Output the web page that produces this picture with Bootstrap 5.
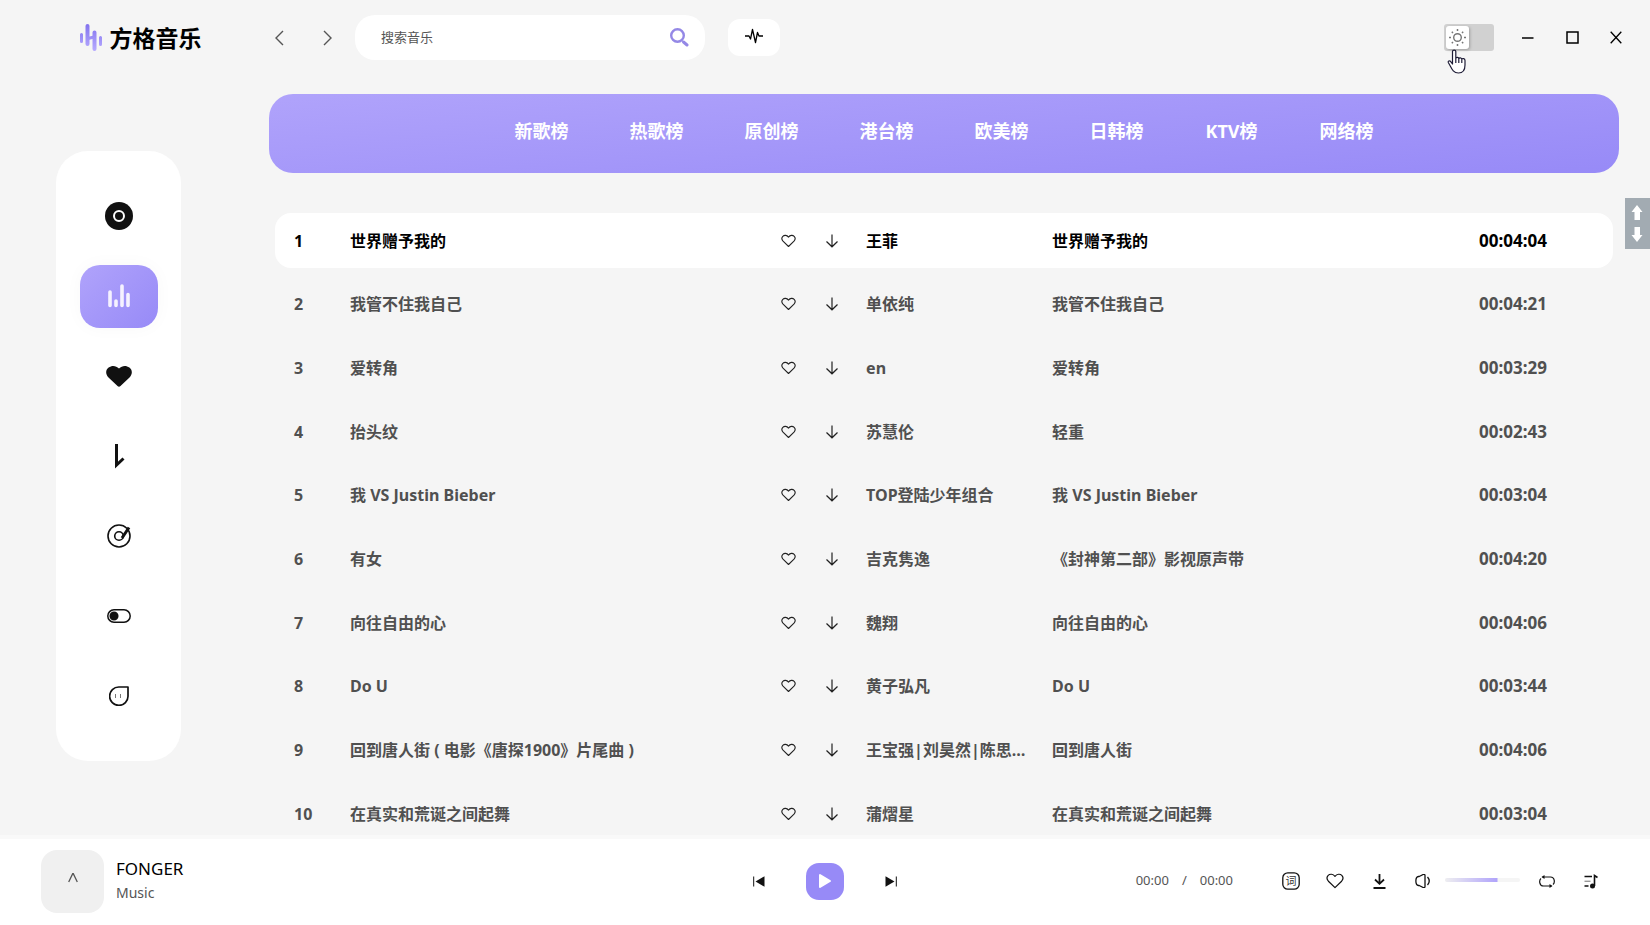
<!DOCTYPE html>
<html lang="zh-CN">
<head>
<meta charset="utf-8">
<meta name="viewport" content="width=device-width, initial-scale=1">
<title>方格音乐</title>
<link href="https://cdn.jsdelivr.net/npm/bootstrap@5.3.0/dist/css/bootstrap.min.css" rel="stylesheet">
<style>
:root { --accent: #978af7; --accent-light: #b0a3fb; --ink: #111; --soft: #505050; }
body { background: #f5f5f5; color: var(--ink); font-family: "Noto Sans", "Noto Sans CJK SC", sans-serif; font-size: 16px; }
svg { display: block; fill: none; stroke: currentColor; }
.plain { border: 0; background: none; padding: 0; color: inherit; display: flex; align-items: center; justify-content: center; }
.rail { width: 269px; }
.topbar { height: 75px; }
.brand { padding-left: 12px; }
.brand-name { font-size: 23px; font-weight: 700; line-height: 32px; color: #000; }
.history { margin-left: -12px; margin-right: 6px; }
.step { width: 44px; height: 44px; color: #555; }
.searchbox { width: 350px; height: 45px; border-radius: 20px; background: #fff; margin-right: 23px; }
.searchbox input { font-size: 13px; color: #555; box-shadow: none !important; padding-left: 26px; }
.searchbox input::placeholder { color: #555; }
.searchbox button { color: #9488e6; }
.pulse { width: 52px; height: 37px; border-radius: 12px; background: #fff; padding-bottom: 3px; color: #000; }
.win { width: 44px; height: 44px; color: #000; }
.theme input { appearance: none; display: block; width: 50px; height: 27px; margin: 0; border-radius: 3px; background: #d1d1d1; }
.theme .knob { left: 2px; top: 2px; width: 23px; height: 23px; border-radius: 3px; background: #fff; box-shadow: 1px 1px 3px rgba(0,0,0,.25); color: #777; display: flex; align-items: center; justify-content: center; }
.hand { left: 3px; top: 25px; z-index: 2; }
.sidenav { width: 125px; border-radius: 32px; background: #fff; margin: 76px 0 0 56px; padding: 25px 0; }
.sidenav li { height: 80px; }
.sidenav a { width: 78px; height: 63px; border-radius: 20px; color: var(--ink); }
.sidenav a.active { background: linear-gradient(135deg, var(--accent-light), var(--accent)); color: #f5f2ff; box-shadow: 0 0 18px rgba(0,0,0,.03); }
.charts { height: 79px; margin: 19px 31px 0 0; padding-bottom: 5px; border-radius: 24px; gap: 61px; background: linear-gradient(175deg, var(--accent-light), var(--accent)); }
.charts a { min-width: 54px; text-align: center; color: #fff; font-size: 18px; font-weight: 700; }
.songs { width: calc(100% - 43px); margin: 31px 0 0 6px; table-layout: fixed; border-collapse: separate; border-spacing: 0 9px; font-weight: 700; color: var(--soft); }
.songs td { height: 55px; padding: 0; vertical-align: middle; white-space: nowrap; overflow: hidden; text-overflow: ellipsis; }
.songs tr:nth-child(3n+2) td { height: 54px; }
.songs td:nth-child(1) { padding-left: 19px; }
.songs td:nth-child(5) { padding: 0 18px 0 12px; }
.songs td:nth-child(7) { font-size: 17px; }
.songs .now { color: #000; }
.songs .now td { background: #fff; }
.songs .now td:first-child { border-radius: 16px 0 0 16px; }
.songs .now td:last-child { border-radius: 0 16px 16px 0; }
.songs button { width: 44px; height: 32px; color: #222; }
.jump { right: 0; top: 198px; width: 25px; height: 51px; background: #a2abb2; color: #fff; padding: 7px 2px 7px 0; }
.player { height: 90px; background: #fff; border-top: 4px solid #f9f9f9; display: grid; grid-template-columns: 1fr auto 1fr; padding: 0 37px 2px; align-items: center; flex: none; z-index: 1; }
.cover { width: 63px; height: 63px; border-radius: 16px; background: #f0f0f0; color: #555; margin-left: 4px; padding-bottom: 7px; }
.song-name { font-size: 17px; line-height: 24px; color: #000; }
.song-by { font-size: 14px; line-height: 24px; color: #555; }
.side { width: 44px; height: 44px; }
.play { width: 38px; height: 37px; border-radius: 13px; background: var(--accent); color: #fff; margin: 0 25px; }
.clock { font-size: 13px; color: #555; gap: 13px; margin-right: 36px; }
.volume { appearance: none; width: 75px; height: 4px; border-radius: 2px; margin: 0 5px 3px 0; background: linear-gradient(90deg, #eeeef0, #b0a3fb) 0 0 / var(--level) 100% no-repeat #f5f5f5; }
.volume::-webkit-slider-thumb { appearance: none; width: 4px; height: 4px; }
</style>
</head>
<body>
<svg class="d-none" aria-hidden="true">
  <symbol id="heart" viewBox="0 0 18 16"><path d="M9 14.6 2.400 8.200C.7 6.300.7 4 2.200 2.400c1.700-1.700 4.800-1.600 6.800.9 2-2.500 5.100-2.600 6.800-.9 1.500 1.600 1.500 3.900-.2 5.800z" stroke-linejoin="round"/></symbol>
  <symbol id="down" viewBox="0 0 14 14"><path d="M7 .5v12.200M1.500 7.500 7 12.800l5.500-5.300"/></symbol>
</svg>
<div class="vh-100 d-flex flex-column overflow-hidden position-relative">
  <div class="d-flex flex-fill" style="min-height:0">
    <aside class="rail flex-shrink-0">
      <div class="topbar brand d-flex align-items-center">
        <svg class="ms-auto flex-shrink-0" width="22" height="27" viewBox="0 0 22 27" stroke-linecap="round" aria-hidden="true">
          <defs><linearGradient id="lg" gradientUnits="userSpaceOnUse" x1="0" y1="0" x2="0" y2="27"><stop stop-color="#8272ee"/><stop offset="1" stop-color="#b7abff"/></linearGradient></defs>
          <g stroke="url(#lg)"><path stroke-width="3" d="M1.500 10.500v7M20.500 13.500v7"/><path stroke-width="4" d="M7.500 2v18M14.500 8.500V25"/><path stroke-width="3" d="M8 14.500 14 13"/></g>
        </svg>
        <span class="brand-name ms-2 me-auto">方格音乐</span>
      </div>
      <nav class="sidenav" aria-label="主导航">
        <ul class="nav flex-column">
          <li class="d-flex align-items-center justify-content-center"><a class="plain" href="#" aria-label="发现"><svg width="28" height="28" viewBox="0 0 28 28"><circle cx="14" cy="14" r="14" fill="currentColor" stroke="none"/><circle cx="14" cy="14" r="5" stroke="#fff" stroke-width="2"/></svg></a></li>
          <li class="d-flex align-items-center justify-content-center"><a class="plain active" href="#" aria-label="排行榜"><svg width="22" height="24" viewBox="0 0 22 24" stroke-width="3.600" stroke-linecap="round"><path d="M2 8v13.500M8 17v4.500M14 2v19.500M20 10.500v11"/></svg></a></li>
          <li class="d-flex align-items-center justify-content-center"><a class="plain" href="#" aria-label="喜欢"><svg width="26" height="21" viewBox="0 0 26 21"><path fill="currentColor" stroke="none" d="M11.500 20 2.500 11.500C-1 8-.2 3.600 2.600 1.600 6-.8 10-.4 13 2.600c3-3 7-3.400 10.400-1 2.800 2 3.600 6.400.1 9.900L14.500 20q-1.500 1.300-3 0z"/></svg></a></li>
          <li class="d-flex align-items-center justify-content-center"><a class="plain" href="#" aria-label="下载"><svg width="12" height="26" viewBox="0 0 12 26" stroke-width="3"><path d="M3.500 1v21l7-6.500"/></svg></a></li>
          <li class="d-flex align-items-center justify-content-center"><a class="plain" href="#" aria-label="唱片"><svg width="24" height="24" viewBox="0 0 24 24" stroke-width="1.600"><circle cx="12" cy="12" r="11"/><circle cx="12" cy="12" r="4.300"/><path stroke-width="3" d="m15 14 7-10.500"/></svg></a></li>
          <li class="d-flex align-items-center justify-content-center"><a class="plain" href="#" aria-label="设置"><svg width="24" height="14" viewBox="0 0 24 14" stroke-width="1.500"><rect x=".8" y=".8" width="22.400" height="12.400" rx="6.200"/><circle cx="7" cy="7" r="3.800" fill="currentColor"/></svg></a></li>
          <li class="d-flex align-items-center justify-content-center"><a class="plain" href="#" aria-label="消息"><svg width="20" height="20" viewBox="0 0 20 20" stroke-width="1.700"><path d="M19 1H10a9.200 9.200 0 1 0 9 9z" stroke-linejoin="round"/><path stroke="#777" stroke-width="1" d="M6.500 8v4M11.500 8v4"/></svg></a></li>
        </ul>
      </nav>
    </aside>
    <div class="flex-fill d-flex flex-column" style="min-width:0">
      <header class="topbar d-flex align-items-center flex-shrink-0">
        <div class="history d-flex align-items-center">
          <button class="plain step" aria-label="后退"><svg width="9" height="16" viewBox="0 0 9 16" stroke-width="1.400"><path d="M8 1 1 8l7 7"/></svg></button>
          <button class="plain step ms-1" aria-label="前进"><svg width="9" height="16" viewBox="0 0 9 16" stroke-width="1.400"><path d="m1 1 7 7-7 7"/></svg></button>
        </div>
        <form class="searchbox d-flex align-items-center" role="search">
          <input class="form-control border-0 bg-transparent py-0" type="search" placeholder="搜索音乐" aria-label="搜索音乐">
          <button type="button" class="plain me-3" aria-label="搜索"><svg width="19" height="19" viewBox="0 0 19 19"><circle cx="7.500" cy="7.500" r="6.300" stroke-width="2.400"/><path stroke-width="3" stroke-linecap="round" d="m13.500 14 3.500 3"/></svg></button>
        </form>
        <button class="plain pulse" aria-label="听歌识曲"><svg width="18" height="16" viewBox="0 0 18 16" stroke-width="1.300" stroke-linejoin="round"><path d="M0 8h4l1.500 3L7.500 1.500l3 13 2-10L14 8h4"/></svg></button>
        <div class="d-flex align-items-center ms-auto me-2 pe-1">
          <label class="theme position-relative me-2"><input type="checkbox" aria-label="深色模式"><span class="knob position-absolute"><svg width="17" height="17" viewBox="0 0 17 17"><circle cx="8.500" cy="8.500" r="3.800" stroke-width="1.400"/><path stroke-width="1.500" d="M8.500 0v2M8.500 15v2M0 8.500h2M15 8.500h2M2.800 2.800 4 4M13 13l1.200 1.200M14.200 2.800 13 4M4 13l-1.200 1.200"/></svg></span>
            <svg class="hand position-absolute" width="20" height="25" viewBox="0 0 20 25" aria-hidden="true"><path d="M5.500 15V2.600C5.500.5 8.800.5 8.800 2.600V9.500c.2-1.700 3-1.500 3 .3.300-1.500 2.900-1.300 3 .5.500-1.300 3.200-1 3.200 1.200V16c0 5-2.500 8-6.500 8-5 0-6.500-3.500-8.500-7.500L1.300 13.500c-.6-1.500 1-2.200 2.200-1.200zM8.800 9.500v4.500M11.800 10v4M14.800 10.500V14" fill="#fff" stroke="#1d1b35" stroke-width="1.200" stroke-linejoin="round"/></svg>
          </label>
          <button class="plain win ms-1" aria-label="最小化"><svg width="12" height="12" viewBox="0 0 12 12" stroke-width="1.500"><path d="M0 6h11.500"/></svg></button>
          <button class="plain win" aria-label="最大化"><svg width="13" height="13" viewBox="0 0 13 13" stroke-width="1.500"><path d="M1 1h11v11H1z"/></svg></button>
          <button class="plain win" aria-label="关闭"><svg width="12" height="13" viewBox="0 0 12 13" stroke-width="1.300"><path d="m.7.700 10.600 11.600M11.300.700.7 12.300"/></svg></button>
        </div>
      </header>
      <nav class="charts d-flex align-items-center justify-content-center flex-shrink-0" aria-label="榜单">
        <a class="text-decoration-none" href="#">新歌榜</a><a class="text-decoration-none" href="#">热歌榜</a><a class="text-decoration-none" href="#">原创榜</a><a class="text-decoration-none" href="#">港台榜</a><a class="text-decoration-none" href="#">欧美榜</a><a class="text-decoration-none" href="#">日韩榜</a><a class="text-decoration-none" href="#">KTV榜</a><a class="text-decoration-none" href="#">网络榜</a>
      </nav>
      <main class="flex-fill overflow-hidden" style="min-height:0">
        <table class="songs">
          <colgroup><col style="width:75px"><col style="width:31.1%"><col style="width:44px"><col style="width:44px"><col style="width:198px"><col><col style="width:134px"></colgroup>
          <tbody id="songRows"></tbody>
        </table>
      </main>
    </div>
  </div>
  <button class="plain jump position-absolute flex-column justify-content-between" aria-label="滚动"><svg width="12" height="16" viewBox="0 0 12 16"><path fill="currentColor" stroke="none" d="m6 0 5.500 7H9v8H3.500V7H.5z"/></svg><svg width="12" height="16" viewBox="0 0 12 16"><path fill="currentColor" stroke="none" d="M6 16 .5 9h3V1H9v8h2.500z"/></svg></button>
  <footer class="player">
    <div class="d-flex align-items-center">
      <button class="plain cover" aria-label="展开"><svg width="10" height="10" viewBox="0 0 10 10" stroke-width="1.300"><path d="m.7 9 4-8.300h.6l4 8.300"/></svg></button>
      <div class="ms-2 ps-1"><div class="song-name">FONGER</div><div class="song-by">Music</div></div>
    </div>
    <div class="d-flex align-items-center">
      <button class="plain side" aria-label="上一首"><svg width="12" height="11" viewBox="0 0 12 11"><path d="M.7.500v10"/><path fill="currentColor" stroke="none" d="M11.500.300v10.400L2.500 5.500z"/></svg></button>
      <button class="plain play" aria-label="播放"><svg width="14" height="16" viewBox="0 0 14 16"><path fill="currentColor" stroke-width="2" stroke-linejoin="round" d="M2 2v12l10-6z"/></svg></button>
      <button class="plain side" aria-label="下一首"><svg width="12" height="11" viewBox="0 0 12 11"><path d="M11.300.500v10"/><path fill="currentColor" stroke="none" d="M.5.300v10.400l9-5.200z"/></svg></button>
    </div>
    <div class="d-flex align-items-center justify-content-end">
      <div class="clock d-flex"><span>00:00</span><span>/</span><span>00:00</span></div>
      <button class="plain side" aria-label="歌词"><svg width="18" height="18" viewBox="0 0 18 18"><rect x=".8" y=".8" width="16.400" height="16.400" rx="5" stroke-width="1.300"/><text x="9" y="13" text-anchor="middle" font-size="11" fill="#333" stroke="none">词</text></svg></button>
      <button class="plain side" aria-label="喜欢"><svg width="18" height="16" stroke-width="1.200"><use href="#heart"/></svg></button>
      <button class="plain side" aria-label="下载"><svg width="13" height="15" viewBox="0 0 13 15" stroke-width="1.800"><path d="M6.500 0v9.500M2 5.500l4.500 4.300L11 5.500M.5 14h12"/></svg></button>
      <button class="plain side" aria-label="静音"><svg width="16" height="14" viewBox="0 0 16 14" stroke-width="1.300"><path d="M3.500 2.500C0 3 0 11 3.500 11.500h.7l4 2c1 .4 1.800 0 1.800-1V1.500c0-1-.8-1.400-1.800-1l-4 2zM12.500 3q3.500 4 0 8" stroke-linejoin="round"/></svg></button>
      <input class="volume" type="range" min="0" max="100" value="70" style="--level:70%" aria-label="音量">
      <button class="plain side" aria-label="循环"><svg width="16" height="13" viewBox="0 0 16 13" stroke-width="1.200"><path d="M3.500 2h8C16 2 16 8 14 9.500M12.500 11h-8C0 11 0 5 2 3.500"/><path fill="currentColor" stroke="none" d="M5.500 0v4L2.500 2zM10.500 9v4l3-2z"/></svg></button>
      <button class="plain side" aria-label="播放列表"><svg width="14" height="15" viewBox="0 0 14 15" stroke-width="1.400"><path d="M.5 2.500H8M.5 12h4"/><path stroke="#999" d="M.5 7.300h6"/><path stroke-width="1.600" d="M10.500 12V1.500l3 2"/><circle cx="8.500" cy="12" r="2.500" fill="currentColor" stroke="none"/></svg></button>
    </div>
  </footer>
</div>
<script src="https://cdn.jsdelivr.net/npm/bootstrap@5.3.0/dist/js/bootstrap.bundle.min.js"></script>
<script>
const songs = [
  ['世界赠予我的', '王菲', '世界赠予我的', '00:04:04'],
  ['我管不住我自己', '单依纯', '我管不住我自己', '00:04:21'],
  ['爱转角', 'en', '爱转角', '00:03:29'],
  ['抬头纹', '苏慧伦', '轻重', '00:02:43'],
  ['我 VS Justin Bieber', 'TOP登陆少年组合', '我 VS Justin Bieber', '00:03:04'],
  ['有女', '吉克隽逸', '《封神第二部》影视原声带', '00:04:20'],
  ['向往自由的心', '魏翔', '向往自由的心', '00:04:06'],
  ['Do U', '黄子弘凡', 'Do U', '00:03:44'],
  ['回到唐人街 ( 电影《唐探1900》片尾曲 )', '王宝强|刘昊然|陈思诚|岳云鹏', '回到唐人街', '00:04:06'],
  ['在真实和荒诞之间起舞', '蒲熠星', '在真实和荒诞之间起舞', '00:03:04']
];
document.getElementById('songRows').innerHTML = songs.map(([title, artist, album, time], i) => `
  <tr class="${i === 0 ? 'now' : ''}"><td>${i + 1}</td><td>${title}</td>
  <td><button class="plain" aria-label="喜欢"><svg width="15" height="14" stroke-width="1.300"><use href="#heart"/></svg></button></td>
  <td><button class="plain" aria-label="下载"><svg width="14" height="14" stroke-width="1.200"><use href="#down"/></svg></button></td>
  <td>${artist}</td><td>${album}</td><td>${time}</td></tr>`).join('');
</script>
</body>
</html>
